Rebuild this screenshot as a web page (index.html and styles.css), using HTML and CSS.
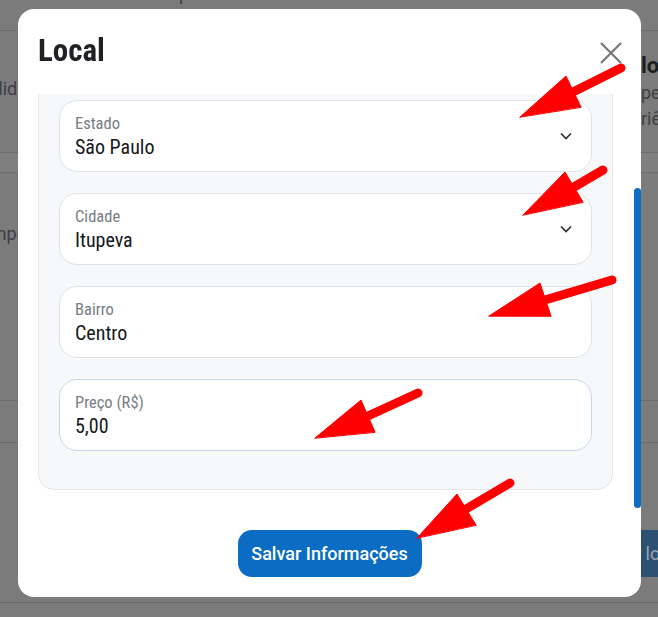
FILE: index.html
```html
<!DOCTYPE html>
<html lang="pt-BR">
<head>
  <meta charset="UTF-8" />
  <meta name="viewport" content="width=device-width, initial-scale=1.0" />
  <title>Local</title>
  <link rel="stylesheet" href="styles.css">
</head>
<body>
  <div class="page">
    <p class="page-lead">Encontre o local certo para você e suas necessidades.</p>
    <div class="band band-intro">
      <div class="cell cell-left"><span class="left-text">Comprar por medida</span></div>
      <div class="cell cell-right">
        <strong class="right-title">local</strong>
        <span class="right-text">pesquise</span>
        <span class="right-text">riências</span>
      </div>
    </div>
    <div class="band band-thin"></div>
    <div class="band band-mid">
      <div class="cell cell-left"><span class="left-text left-low">Tempo</span></div>
      <div class="cell cell-right"></div>
    </div>
    <div class="band band-split"></div>
    <div class="band band-foot">
      <div class="cell cell-left"></div>
      <div class="cell cell-right"><span class="page-btn">r local</span></div>
    </div>
    <div class="band band-end"></div>
  </div>

  <div class="modal">
    <div class="modal-header">
      <h2 class="modal-title">Local</h2>
      <button class="modal-close" aria-label="Fechar">
        <svg width="22" height="22" viewBox="0 0 22 22"><path d="M1 1 L21 21 M21 1 L1 21" stroke="#767676" stroke-width="2.2" fill="none"/></svg>
      </button>
    </div>
    <div class="modal-body">
      <div class="panel">
        <div class="field">
          <div class="field-text">
            <span class="field-label">CEP</span>
            <span class="field-value">13295-000</span>
          </div>
        </div>
        <div class="field">
          <div class="field-text">
            <span class="field-label">Estado</span>
            <span class="field-value">São Paulo</span>
          </div>
          <svg class="chevron" width="12" height="8" viewBox="0 0 12 8"><path d="M1 1.5 L6 6.5 L11 1.5" stroke="#2b2f36" stroke-width="1.7" fill="none"/></svg>
        </div>
        <div class="field">
          <div class="field-text">
            <span class="field-label">Cidade</span>
            <span class="field-value">Itupeva</span>
          </div>
          <svg class="chevron" width="12" height="8" viewBox="0 0 12 8"><path d="M1 1.5 L6 6.5 L11 1.5" stroke="#2b2f36" stroke-width="1.7" fill="none"/></svg>
        </div>
        <div class="field">
          <div class="field-text">
            <span class="field-label">Bairro</span>
            <span class="field-value">Centro</span>
          </div>
        </div>
        <div class="field field-focus">
          <div class="field-text">
            <span class="field-label">Preço (R$)</span>
            <span class="field-value">5,00</span>
          </div>
        </div>
      </div>
    </div>
    <div class="scroll-thumb"></div>
    <div class="modal-footer">
      <button class="save-btn">Salvar Informações</button>
    </div>
  </div>

  <svg class="arrows" width="658" height="617" viewBox="0 0 658 617">
    <g stroke="#ff0000" stroke-width="9" stroke-linecap="round" fill="#ff0000">
      <line x1="621" y1="68" x2="573" y2="92" />
      <polygon points="520,117 566,76 581,107" stroke-width="1" />
      <line x1="603" y1="170" x2="574" y2="187" />
      <polygon points="523,215 565,172 583,202" stroke-width="1" />
      <line x1="612" y1="280" x2="545" y2="300" />
      <polygon points="489,316 540,283 551,316" stroke-width="1" />
      <line x1="418" y1="393" x2="368" y2="416" />
      <polygon points="315,438 361,400 375,432" stroke-width="1" />
      <line x1="510" y1="483" x2="466" y2="509" />
      <polygon points="417,538 457,494 476,525" stroke-width="1" />
    </g>
  </svg>

  <script>
    const body = document.querySelector('.modal-body');
    body.scrollTop = body.scrollHeight;
  </script>
</body>
</html>
```

FILE: styles.css
```css
* {
  box-sizing: border-box;
}

body {
  margin: 0;
  background: #7b7b7b;
  font-family: Roboto, "Liberation Sans", sans-serif;
  overflow: hidden;
}

/* page behind the overlay */
.page {
  display: flex;
  flex-direction: column;
  height: 617px;
  color: #37393d;
}

.page-lead {
  margin: -17px 0 0 0;
  height: 47px;
  font-size: 18px;
  line-height: 22px;
  white-space: nowrap;
  color: #3b3d40;
}

.band {
  display: flex;
  justify-content: space-between;
  border-top: 1px solid #6c6c6c;
}

.band-intro { height: 122px; }
.band-thin { height: 20px; background: #7f7f7f; }
.band-mid { height: 228px; }
.band-split { height: 42px; }
.band-foot { height: 160px; }
.band-end { flex: 1; }

.cell {
  overflow: hidden;
  white-space: nowrap;
}

.cell-left {
  width: 27px;
  display: flex;
  justify-content: flex-end;
  align-items: flex-start;
}

.cell-right {
  width: 17px;
  display: flex;
  flex-direction: column;
  padding-top: 21px;
}

.left-text {
  font-size: 18px;
  margin-top: 47px;
  color: #3e4044;
}

.left-low {
  margin-top: 50px;
}

.right-title {
  font-size: 22px;
  line-height: 28px;
  color: #1d1e20;
}

.right-text {
  font-size: 18px;
  line-height: 26px;
  color: #3e4044;
}

.page-btn {
  margin-top: 66px;
  height: 47px;
  line-height: 47px;
  background: #2e5071;
  color: #9aa6b4;
  font-size: 18px;
  margin-left: -6px;
}

/* modal */
.modal {
  position: fixed;
  top: 9px;
  left: 18px;
  width: 623px;
  height: 588px;
  background: #fff;
  border-radius: 16px;
  display: flex;
  flex-direction: column;
  overflow: hidden;
  font-stretch: 85%;
}

.modal-header {
  display: flex;
  justify-content: space-between;
  align-items: flex-start;
  padding: 23px 19px 24px 20px;
}

.modal-title {
  margin: 0;
  font-size: 31px;
  line-height: 38px;
  font-weight: 700;
  color: #1f2125;
}

.modal-close {
  margin-top: 10px;
  padding: 0;
  border: none;
  background: none;
  width: 22px;
  height: 22px;
}

.modal-body {
  flex: 1;
  overflow-y: auto;
  scrollbar-width: none;
  padding: 0 28px 20px 20px;
}

.scroll-thumb {
  position: absolute;
  right: 0;
  top: 179px;
  width: 7px;
  height: 320px;
  background: #0b6cc4;
  border-radius: 4px;
}

.panel {
  background: #f7f8fa;
  border: 1px solid #e2e5ea;
  border-radius: 16px;
  padding: 24px 20px 38px;
  display: flex;
  flex-direction: column;
  gap: 21px;
}

.field {
  height: 72px;
  background: #fff;
  border: 1px solid #dfe3e9;
  border-radius: 18px;
  display: flex;
  align-items: center;
  justify-content: space-between;
  padding: 0 19px 0 15px;
}

.field-focus {
  border-color: #c7d7ee;
}

.field-text {
  display: flex;
  flex-direction: column;
  gap: 1px;
}

.field-label {
  font-size: 16.5px;
  line-height: 20px;
  color: #787d85;
}

.field-value {
  font-size: 20px;
  line-height: 24px;
  color: #15171b;
}

.modal-footer {
  display: flex;
  justify-content: center;
  padding: 20px 0 20px;
}

.save-btn {
  width: 184px;
  height: 47px;
  border: none;
  border-radius: 14px;
  background: #0b6cc4;
  color: #fff;
  font-family: Roboto, "Liberation Sans", sans-serif;
  font-stretch: 88%;
  font-size: 18px;
  font-weight: 500;
  padding: 0;
}

.arrows {
  position: fixed;
  top: 0;
  left: 0;
  pointer-events: none;
}
```
